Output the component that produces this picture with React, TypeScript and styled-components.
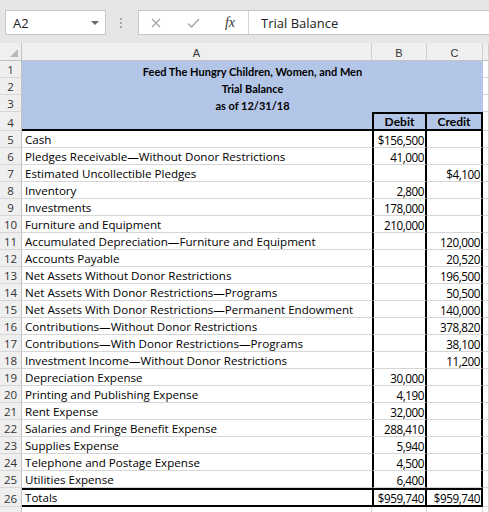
import React from 'react';
import styled, { createGlobalStyle, css } from 'styled-components';

const GlobalStyle = createGlobalStyle`
  html, body { margin: 0; padding: 0; background: #fff; overflow: hidden; }
  body { font-family: "Open Sans", "Liberation Sans", sans-serif; }
`;

const Page = styled.div`
  width: 489px;
  height: 512px;
  overflow: hidden;
  display: flex;
  flex-direction: column;
  background: #fff;
`;

const Toolbar = styled.div`
  height: 43px;
  flex: none;
  box-sizing: border-box;
  background: #e6e6e6;
  display: flex;
  align-items: flex-start;
  padding: 10px 0 0 5px;
`;

const NameBox = styled.div`
  width: 101px;
  height: 25px;
  box-sizing: border-box;
  background: #fff;
  border: 1px solid #c6c6c6;
  display: flex;
  align-items: center;
  justify-content: space-between;
  padding: 0 6px 0 7px;
  font-family: "Open Sans", sans-serif;
  font-size: 13px;
  color: #222;
`;

const DropArrow = styled.span`
  width: 0;
  height: 0;
  border-left: 4px solid transparent;
  border-right: 4px solid transparent;
  border-top: 4px solid #6a6a6a;
`;

const Grip = styled.div`
  width: 3px;
  height: 25px;
  margin: 0 15px 0 14px;
  display: flex;
  flex-direction: column;
  justify-content: center;
  gap: 2px;
`;

const GripDot = styled.span`
  width: 2px;
  height: 2px;
  background: #a8a8a8;
`;

const FormulaBox = styled.div`
  flex: 1;
  height: 25px;
  box-sizing: border-box;
  background: #fff;
  border: 1px solid #c6c6c6;
  border-right: none;
  display: flex;
  align-items: center;
`;

const FxButtons = styled.div`
  width: 110px;
  height: 100%;
  display: flex;
  align-items: center;
  padding-left: 11px;
  box-sizing: border-box;
  border-right: 1px solid #d4d4d4;
`;

const IconSlot = styled.div<{ $w: number }>`
  width: ${(p) => p.$w}px;
  display: flex;
  justify-content: center;
  align-items: center;
`;

const FxText = styled.span`
  font-family: "Liberation Serif", serif;
  font-style: italic;
  font-size: 14px;
  color: #333;
`;

const FormulaText = styled.div`
  padding-left: 12px;
  font-family: "Open Sans", sans-serif;
  font-size: 13px;
  color: #222;
`;

const Sheet = styled.div`
  display: grid;
  grid-template-columns: 22px 350px 55px 56px 6px;
  grid-template-rows: 18px 17px 17px 17px 19px repeat(21, 17px) 19px 17px;
`;

const Corner = styled.div`
  background: #efefef;
  border-right: 1px solid #c2c2c2;
  border-bottom: 1px solid #c2c2c2;
  box-sizing: border-box;
  display: flex;
  align-items: flex-end;
  justify-content: flex-end;
  padding: 0 3px 3px 0;
`;

const CornerTri = styled.span`
  width: 0;
  height: 0;
  border-left: 8px solid transparent;
  border-bottom: 8px solid #b9b9b9;
`;

const ColHead = styled.div`
  background: #efefef;
  border-right: 1px solid #d0d0d0;
  border-bottom: 1px solid #c2c2c2;
  box-sizing: border-box;
  display: flex;
  align-items: center;
  justify-content: center;
  padding-top: 3px;
  font-family: "Liberation Sans", sans-serif;
  font-size: 11px;
  color: #333;
`;

const RowHead = styled.div`
  background: #efefef;
  border-right: 1px solid #c2c2c2;
  border-bottom: 1px solid #d6d6d6;
  box-sizing: border-box;
  display: flex;
  align-items: flex-end;
  justify-content: center;
  font-family: "Open Sans", sans-serif;
  font-size: 11.5px;
  line-height: 14px;
  color: #333;
`;

type CellProps = {
  $kind?: 'label' | 'num' | 'head' | 'title';
  $blue?: boolean;
  $span?: number;
  $bt?: boolean;
  $bb?: boolean;
  $bl?: boolean;
  $br?: boolean;
  $noGrid?: boolean;
  $noRight?: boolean;
};

const thick = '2px solid #000';
const grid = '1px solid #d6d6d6';

const kindStyles = {
  label: css`
    justify-content: flex-start;
    padding: 0 0 0 3px;
    font-family: "Open Sans", sans-serif;
    font-size: 11.6px;
    line-height: 14px;
  `,
  num: css`
    justify-content: flex-end;
    padding: 0 1px 0 0;
    font-family: "Open Sans", sans-serif;
    font-size: 11.7px;
    letter-spacing: -0.45px;
    line-height: 14px;
  `,
  head: css`
    justify-content: center;
    padding: 0;
    font-family: Lato, sans-serif;
    font-weight: 700;
    font-size: 12px;
    line-height: 14px;
  `,
  title: css`
    justify-content: center;
    padding: 0;
    font-family: Lato, sans-serif;
    font-weight: 700;
    font-size: 11px;
    line-height: 13px;
  `,
};

const Cell = styled.div<CellProps>`
  box-sizing: border-box;
  display: flex;
  align-items: flex-end;
  white-space: nowrap;
  overflow: hidden;
  color: #000;
  background: ${(p) => (p.$blue ? '#b4c6e7' : '#fff')};
  grid-column: span ${(p) => p.$span ?? 1};
  border-right: ${(p) => (p.$br ? thick : p.$noGrid || p.$noRight ? 'none' : grid)};
  border-bottom: ${(p) => (p.$bb ? thick : p.$noGrid ? 'none' : grid)};
  border-top: ${(p) => (p.$bt ? thick : 'none')};
  border-left: ${(p) => (p.$bl ? thick : 'none')};
  ${(p) => kindStyles[p.$kind ?? 'label']}
`;

const rows: [string, string, string][] = [
  ['Cash', '$156,500', ''],
  ['Pledges Receivable\u2014Without Donor Restrictions', '41,000', ''],
  ['Estimated Uncollectible Pledges', '', '$4,100'],
  ['Inventory', '2,800', ''],
  ['Investments', '178,000', ''],
  ['Furniture and Equipment', '210,000', ''],
  ['Accumulated Depreciation\u2014Furniture and Equipment', '', '120,000'],
  ['Accounts Payable', '', '20,520'],
  ['Net Assets Without Donor Restrictions', '', '196,500'],
  ['Net Assets With Donor Restrictions\u2014Programs', '', '50,500'],
  ['Net Assets With Donor Restrictions\u2014Permanent Endowment', '', '140,000'],
  ['Contributions\u2014Without Donor Restrictions', '', '378,820'],
  ['Contributions\u2014With Donor Restrictions\u2014Programs', '', '38,100'],
  ['Investment Income\u2014Without Donor Restrictions', '', '11,200'],
  ['Depreciation Expense', '30,000', ''],
  ['Printing and Publishing Expense', '4,190', ''],
  ['Rent Expense', '32,000', ''],
  ['Salaries and Fringe Benefit Expense', '288,410', ''],
  ['Supplies Expense', '5,940', ''],
  ['Telephone and Postage Expense', '4,500', ''],
  ['Utilities Expense', '6,400', ''],
];

const titles = [
  'Feed The Hungry Children, Women, and Men',
  'Trial Balance',
  'as of 12/31/18',
];

export default function App() {
  return (
    <Page>
      <GlobalStyle />
      <Toolbar>
        <NameBox>
          <span>A2</span>
          <DropArrow />
        </NameBox>
        <Grip>
          <GripDot />
          <GripDot />
          <GripDot />
        </Grip>
        <FormulaBox>
          <FxButtons>
            <IconSlot $w={12}>
              <svg width="10" height="10" viewBox="0 0 10 10">
                <path d="M1 1 L9 9 M9 1 L1 9" stroke="#a3a3a3" strokeWidth="1.2" fill="none" />
              </svg>
            </IconSlot>
            <IconSlot $w={62}>
              <svg width="13" height="10" viewBox="0 0 13 10">
                <path d="M1 5.5 L4.5 9 L12 1" stroke="#a3a3a3" strokeWidth="1.3" fill="none" />
              </svg>
            </IconSlot>
            <IconSlot $w={12}>
              <FxText>fx</FxText>
            </IconSlot>
          </FxButtons>
          <FormulaText>Trial Balance</FormulaText>
        </FormulaBox>
      </Toolbar>
      <Sheet>
        <Corner>
          <CornerTri />
        </Corner>
        <ColHead>A</ColHead>
        <ColHead>B</ColHead>
        <ColHead>C</ColHead>
        <ColHead />

        {titles.map((t, i) => (
          <React.Fragment key={t}>
            <RowHead>{i + 1}</RowHead>
            <Cell $kind="title" $span={3} $blue $noGrid>
              {t}
            </Cell>
            <Cell />
          </React.Fragment>
        ))}

        <RowHead>4</RowHead>
        <Cell $blue $noRight $bb />
        <Cell $kind="head" $blue $bt $bb $bl $br>
          Debit
        </Cell>
        <Cell $kind="head" $blue $bt $bb $br>
          Credit
        </Cell>
        <Cell />

        {rows.map(([label, debit, credit], i) => (
          <React.Fragment key={label}>
            <RowHead>{i + 5}</RowHead>
            <Cell $noRight>{label}</Cell>
            <Cell $kind="num" $bl $br>
              {debit}
            </Cell>
            <Cell $kind="num" $br>
              {credit}
            </Cell>
            <Cell />
          </React.Fragment>
        ))}

        <RowHead>26</RowHead>
        <Cell $noRight $bt $bb>
          Totals
        </Cell>
        <Cell $kind="num" $bl $br $bt $bb>
          $959,740
        </Cell>
        <Cell $kind="num" $br $bt $bb>
          $959,740
        </Cell>
        <Cell />

        <RowHead />
        <Cell />
        <Cell />
        <Cell />
        <Cell />
      </Sheet>
    </Page>
  );
}
